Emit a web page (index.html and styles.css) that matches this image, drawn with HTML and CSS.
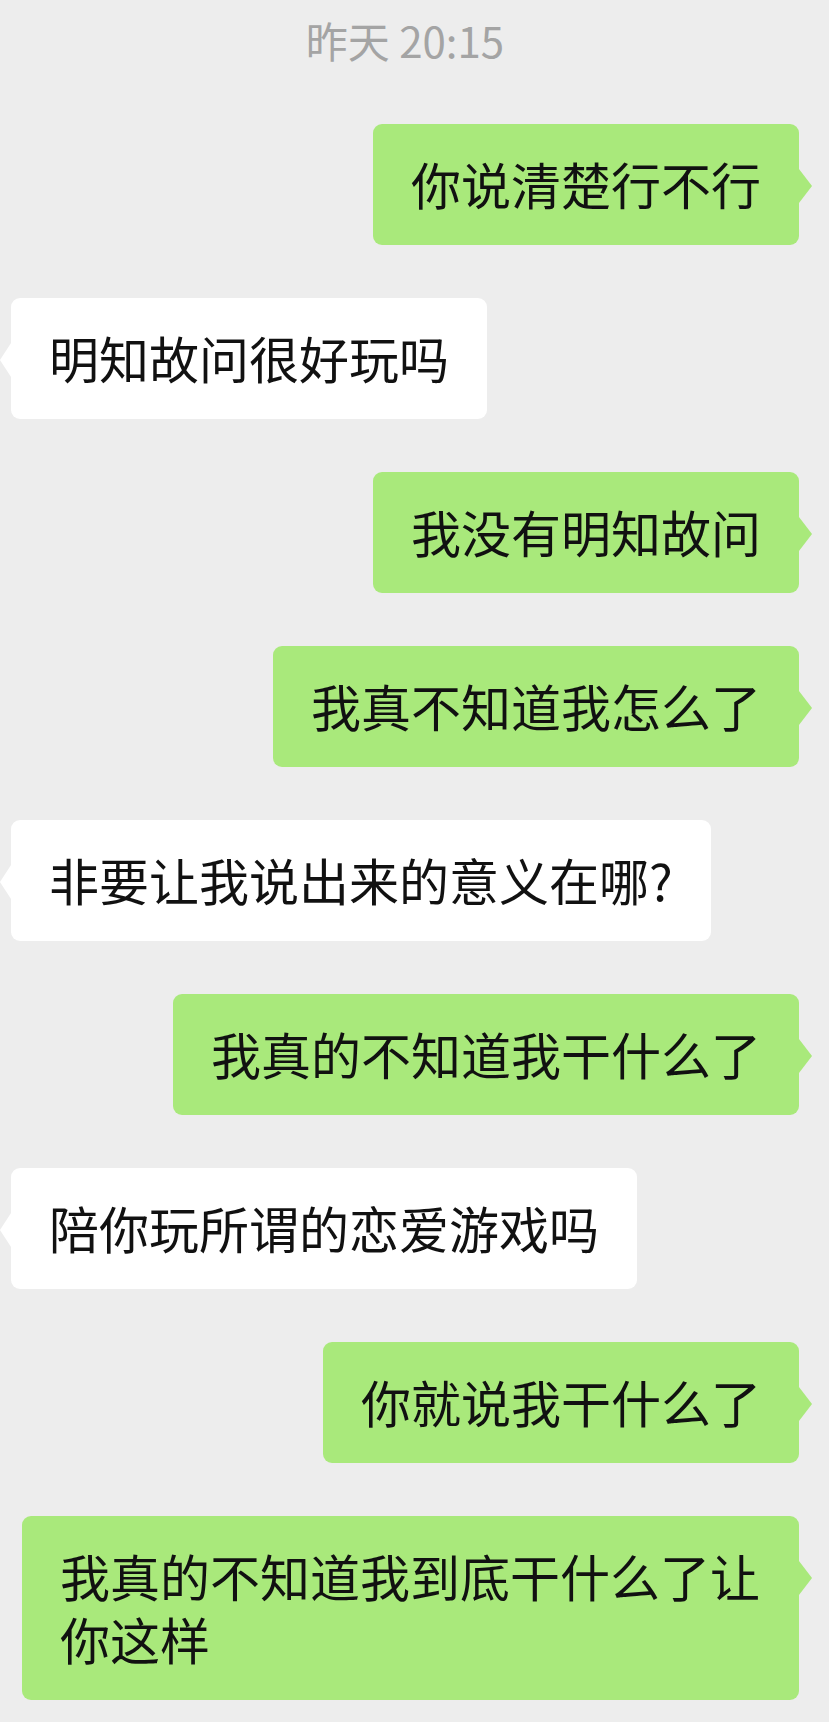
FILE: index.html
```html
<!DOCTYPE html>
<html lang="zh-CN">
<head>
  <meta charset="UTF-8" />
  <meta name="viewport" content="width=device-width, initial-scale=1" />
  <title>聊天记录</title>
  <link rel="stylesheet" href="styles.css">
</head>
<body>

<div class="chat">
  <div class="time">昨天 20:15</div>

  <div class="messages">
    <div class="row me"><div class="bubble">你说清楚行不行</div></div>
    <div class="row them"><div class="bubble">明知故问很好玩吗</div></div>
    <div class="row me"><div class="bubble">我没有明知故问</div></div>
    <div class="row me"><div class="bubble">我真不知道我怎么了</div></div>
    <div class="row them"><div class="bubble">非要让我说出来的意义在哪?</div></div>
    <div class="row me"><div class="bubble">我真的不知道我干什么了</div></div>
    <div class="row them"><div class="bubble">陪你玩所谓的恋爱游戏吗</div></div>
    <div class="row me"><div class="bubble">你就说我干什么了</div></div>
    <div class="row me"><div class="bubble">我真的不知道我到底干什么了让你这样</div></div>
  </div>
</div>

</body>
</html>
```

FILE: styles.css
```css
body {
  margin: 0;
  background-color: #ededed;
  font-family: "Noto Sans CJK SC", "Noto Sans", sans-serif;
  color: #111;
}

.chat {
  padding: 16px 30px 20px 11px;
}

.time {
  text-align: center;
  font-size: 42px;
  line-height: 48px;
  color: #a4a4a4;
  margin-bottom: 60px;
}

.messages {
  display: flex;
  flex-direction: column;
  gap: 53px;
}

.row {
  display: flex;
}

.row.me {
  justify-content: flex-end;
}

.row.them {
  justify-content: flex-start;
}

.bubble {
  position: relative;
  max-width: 701px;
  padding: 28px 38px 30px;
  font-size: 50px;
  line-height: 63px;
  border-radius: 9px;
}

.me .bubble {
  background-color: #a9e97b;
}

.them .bubble {
  background-color: #fff;
}

/* little tail on the side of each bubble */
.bubble::after {
  content: "";
  position: absolute;
  top: 45px;
  width: 13px;
  height: 34px;
}

.me .bubble::after {
  right: -13px;
  background-color: #a9e97b;
  clip-path: polygon(0 0, 100% 50%, 0 100%);
}

.them .bubble::after {
  left: -11px;
  width: 11px;
  background-color: #fff;
  clip-path: polygon(100% 0, 0 50%, 100% 100%);
}
```
